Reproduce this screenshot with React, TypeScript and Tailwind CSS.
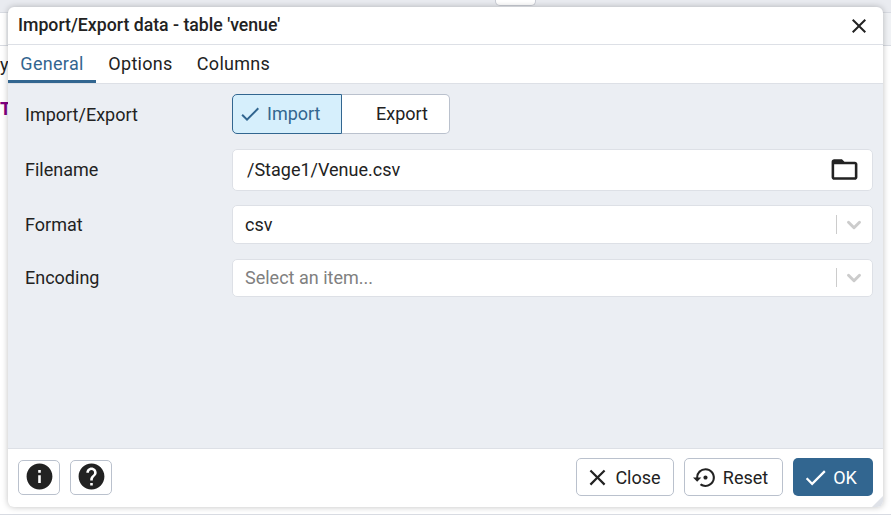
import { ChevronDown } from 'lucide-react';
import { MdCheck, MdClose, MdFolderOpen, MdHelp, MdInfo, MdSettingsBackupRestore } from 'react-icons/md';

const Row = ({ label, className, labelClass, children }: { label: string; className: string; labelClass?: string; children: React.ReactNode }) => (
  <div className={`flex items-center ${className}`}>
    <div className={`w-[224px] pl-[17px] text-[#222] ${labelClass ?? ''}`}>{label}</div>
    <div className="flex-1">{children}</div>
  </div>
);

const Select = ({ value, muted, className }: { value: string; muted?: boolean; className: string }) => (
  <div className={`flex items-center rounded-[5px] border border-[#dde0e6] bg-white pl-3 pr-[7px] ${className}`}>
    <span className={`flex-1 ${muted ? 'text-[#808080]' : 'text-[#222]'}`}>{value}</span>
    <span className="h-[19px] w-px bg-[#cccccc]" />
    <ChevronDown size={22} strokeWidth={3.2} className="ml-[6px] text-[#cccccc]" />
  </div>
);

const FooterButton = ({ children, className }: { children: React.ReactNode; className: string }) => (
  <button className={`flex items-center justify-center rounded-[5px] border border-[#bac1cd] bg-white text-[#222] ${className}`}>
    {children}
  </button>
);

export default function App() {
  return (
    <div className="relative h-[516px] w-[891px] overflow-hidden bg-white font-['Roboto',sans-serif] text-[18px]">
      {/* what is left of the page behind the dialog */}
      <div className="h-[13px] border-b border-[#d8dbe2] bg-[#e9ebf0]">
        <div className="ml-[495px] h-[6px] w-[41px] rounded-b-[5px] border border-t-0 border-[#c9ccd4] bg-white" />
      </div>
      <div className="h-[33px] border-b border-[#d8dbe2] bg-[#f0f2f5]">
        <div className="h-full w-[6px] bg-white" />
      </div>
      <div className="flex h-[32px] items-end leading-[26px] text-[#222]">y</div>
      <div className="h-[30px] pt-[22px] font-bold leading-none text-[#800080]">T</div>
      <div className="mt-[406px] h-px bg-[#d8dbe2]" />

      <div className="absolute left-[8px] top-[7px] flex h-[500px] w-[875px] flex-col overflow-hidden rounded-md bg-white shadow-[0_0_6px_rgba(0,0,0,0.25)]">
        <div className="flex h-[38px] shrink-0 items-center justify-between border-b border-[#dde0e6] pl-[10px] pr-[12px]">
          <span className="text-[17.7px] font-medium text-[#222]">Import/Export data - table 'venue'</span>
          <MdClose size={24} className="text-[#222]" />
        </div>

        <div className="flex h-[39px] shrink-0 border-b border-[#dde0e6] tracking-[0.3px]">
          <div className="flex w-[88px] items-center justify-center border-b-[3px] border-[#326690] pt-px text-[#326690]">General</div>
          <div className="flex w-[89px] items-center justify-center pb-[2px] text-[#222]">Options</div>
          <div className="flex w-[97px] items-center justify-center pb-[2px] text-[#222]">Columns</div>
        </div>

        <div className="flex-1 border-b border-[#dde0e6] bg-[#ebeef3] pr-[10px]">
          <Row label="Import/Export" className="mt-[10px]">
            <div className="flex h-[40px] w-[218px]">
              <div className="flex w-[110px] items-center gap-[5px] rounded-l-[5px] border border-[#326690] bg-[#d6effc] pb-px pl-[5px] text-[#326690]">
                <MdCheck size={24} />
                Import
              </div>
              <div className="flex flex-1 items-center justify-center rounded-r-[5px] border border-l-0 border-[#bac1cd] bg-white pb-px pl-[13px] text-[#222]">Export</div>
            </div>
          </Row>
          <Row label="Filename" labelClass="pb-[2px]" className="mt-[15px]">
            <div className="flex h-[42px] items-center justify-between rounded-[5px] border border-[#dde0e6] bg-white pb-[2px] pl-[14px] pr-[12px] text-[#222]">
              /Stage1/Venue.csv
              <MdFolderOpen size={31} />
            </div>
          </Row>
          <Row label="Format" className="mt-[14px]">
            <Select value="csv" className="h-[39px]" />
          </Row>
          <Row label="Encoding" labelClass="pb-px" className="mt-[15px]">
            <Select value="Select an item..." muted className="h-[38px] pb-px" />
          </Row>
        </div>

        <div className="relative flex h-[58px] shrink-0 items-center gap-[10px] px-[10px] pb-[2px]">
          <FooterButton className="h-[35px] w-[42px] pb-px">
            <MdInfo size={31} className="text-[#222]" />
          </FooterButton>
          <FooterButton className="h-[35px] w-[42px] pb-px">
            <MdHelp size={31} className="text-[#222]" />
          </FooterButton>
          <div className="flex-1" />
          <FooterButton className="h-[38px] w-[98px] gap-[4px] pr-[5px]">
            <MdClose size={27} />
            Close
          </FooterButton>
          <FooterButton className="h-[38px] w-[99px] gap-[5px] pr-[6px]">
            <MdSettingsBackupRestore size={25} />
            Reset
          </FooterButton>
          <button className="flex h-[38px] w-[80px] items-center justify-center gap-[4px] rounded-[5px] bg-[#326690] pr-[7px] text-white">
            <MdCheck size={27} />
            OK
          </button>
          {/* resize grip */}
          <div className="absolute bottom-0 right-0 h-0 w-0 border-b-[11px] border-l-[11px] border-b-[#dfe2e8] border-l-transparent" />
        </div>
      </div>
    </div>
  );
}
